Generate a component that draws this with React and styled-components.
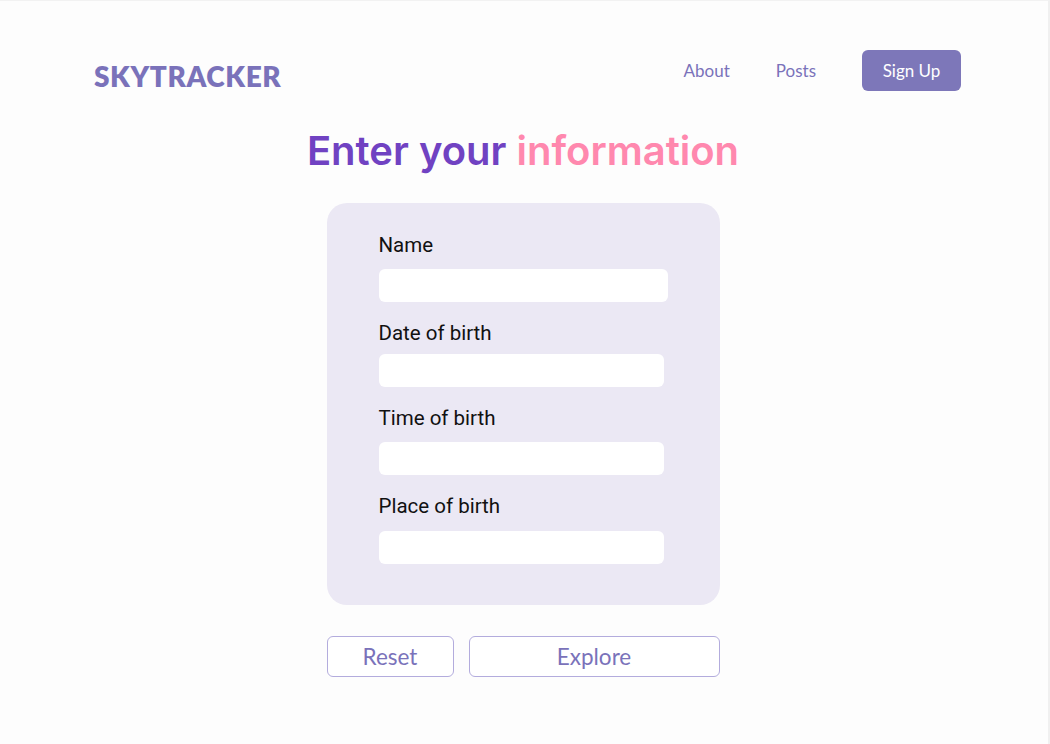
import styled, { createGlobalStyle } from 'styled-components';

const GlobalStyle = createGlobalStyle`
  html, body {
    margin: 0;
    padding: 0;
    background: #fff;
  }
  * {
    box-sizing: border-box;
  }
`;

const Page = styled.div`
  width: 1050px;
  min-height: 744px;
  background: #fdfdfd;
  border-top: 1px solid #f2f2f2;
  border-right: 2px solid #f0f0f0;
  font-family: 'Lato', 'Inter', sans-serif;
`;

const Header = styled.header`
  display: flex;
  align-items: center;
  justify-content: space-between;
  padding: 46px 87px 0 94px;
`;

const Logo = styled.div`
  font-family: 'Lato', sans-serif;
  font-weight: 800;
  font-size: 28px;
  letter-spacing: 0.6px;
  color: #7a72ba;
  margin-top: 12px;
`;

const Nav = styled.nav`
  display: flex;
  align-items: center;
`;

const NavLink = styled.a`
  font-size: 17px;
  color: #7a72ba;
  margin-right: 46px;
  cursor: pointer;
`;

const SignUp = styled.button`
  width: 99px;
  height: 41px;
  border: none;
  border-radius: 6px;
  background: #7d77b9;
  color: #fff;
  font-family: inherit;
  font-size: 17px;
`;

const Main = styled.main`
  display: flex;
  flex-direction: column;
  align-items: center;
  padding-right: 2px;
`;

const Title = styled.h1`
  margin: 34px 0 0;
  font-family: 'Inter', sans-serif;
  font-size: 40px;
  font-weight: 600;
  line-height: 48px;
  color: #7042c2;
  span {
    color: #ff88ae;
  }
`;

const Card = styled.form`
  width: 393px;
  margin-top: 28px;
  padding: 31px 52px 41px;
  background: #ebe8f4;
  border-radius: 20px;
  display: flex;
  flex-direction: column;
  gap: 20px;
`;

const Field = styled.label`
  display: flex;
  flex-direction: column;
`;

const Label = styled.span`
  font-family: 'Roboto', sans-serif;
  font-size: 20.5px;
  line-height: 22px;
  color: #111;
  margin-bottom: ${(p) => p.$gap}px;
`;

const Input = styled.input`
  width: ${(p) => p.$w}px;
  height: 33px;
  border: none;
  border-radius: 6px;
  background: #fff;
  outline: none;
`;

const Actions = styled.div`
  width: 393px;
  margin-top: 31px;
  display: flex;
  gap: 15px;
`;

const OutlineButton = styled.button`
  width: ${(p) => p.$w}px;
  height: 41px;
  background: #fff;
  border: 1px solid #b3acdd;
  border-radius: 6px;
  color: #7a72ba;
  font-family: 'Lato', sans-serif;
  font-size: 22.5px;
`;

const fields = [
  { label: 'Name', w: 289, gap: 13 },
  { label: 'Date of birth', w: 285, gap: 10 },
  { label: 'Time of birth', w: 285, gap: 13 },
  { label: 'Place of birth', w: 285, gap: 14 },
];

export default function App() {
  return (
    <>
      <GlobalStyle />
      <Page>
        <Header>
          <Logo>SKYTRACKER</Logo>
          <Nav>
            <NavLink>About</NavLink>
            <NavLink>Posts</NavLink>
            <SignUp>Sign Up</SignUp>
          </Nav>
        </Header>
        <Main>
          <Title>
            Enter your <span>information</span>
          </Title>
          <Card onSubmit={(e) => e.preventDefault()}>
            {fields.map((f) => (
              <Field key={f.label}>
                <Label $gap={f.gap}>{f.label}</Label>
                <Input $w={f.w} />
              </Field>
            ))}
          </Card>
          <Actions>
            <OutlineButton $w={127}>Reset</OutlineButton>
            <OutlineButton $w={251}>Explore</OutlineButton>
          </Actions>
        </Main>
      </Page>
    </>
  );
}
